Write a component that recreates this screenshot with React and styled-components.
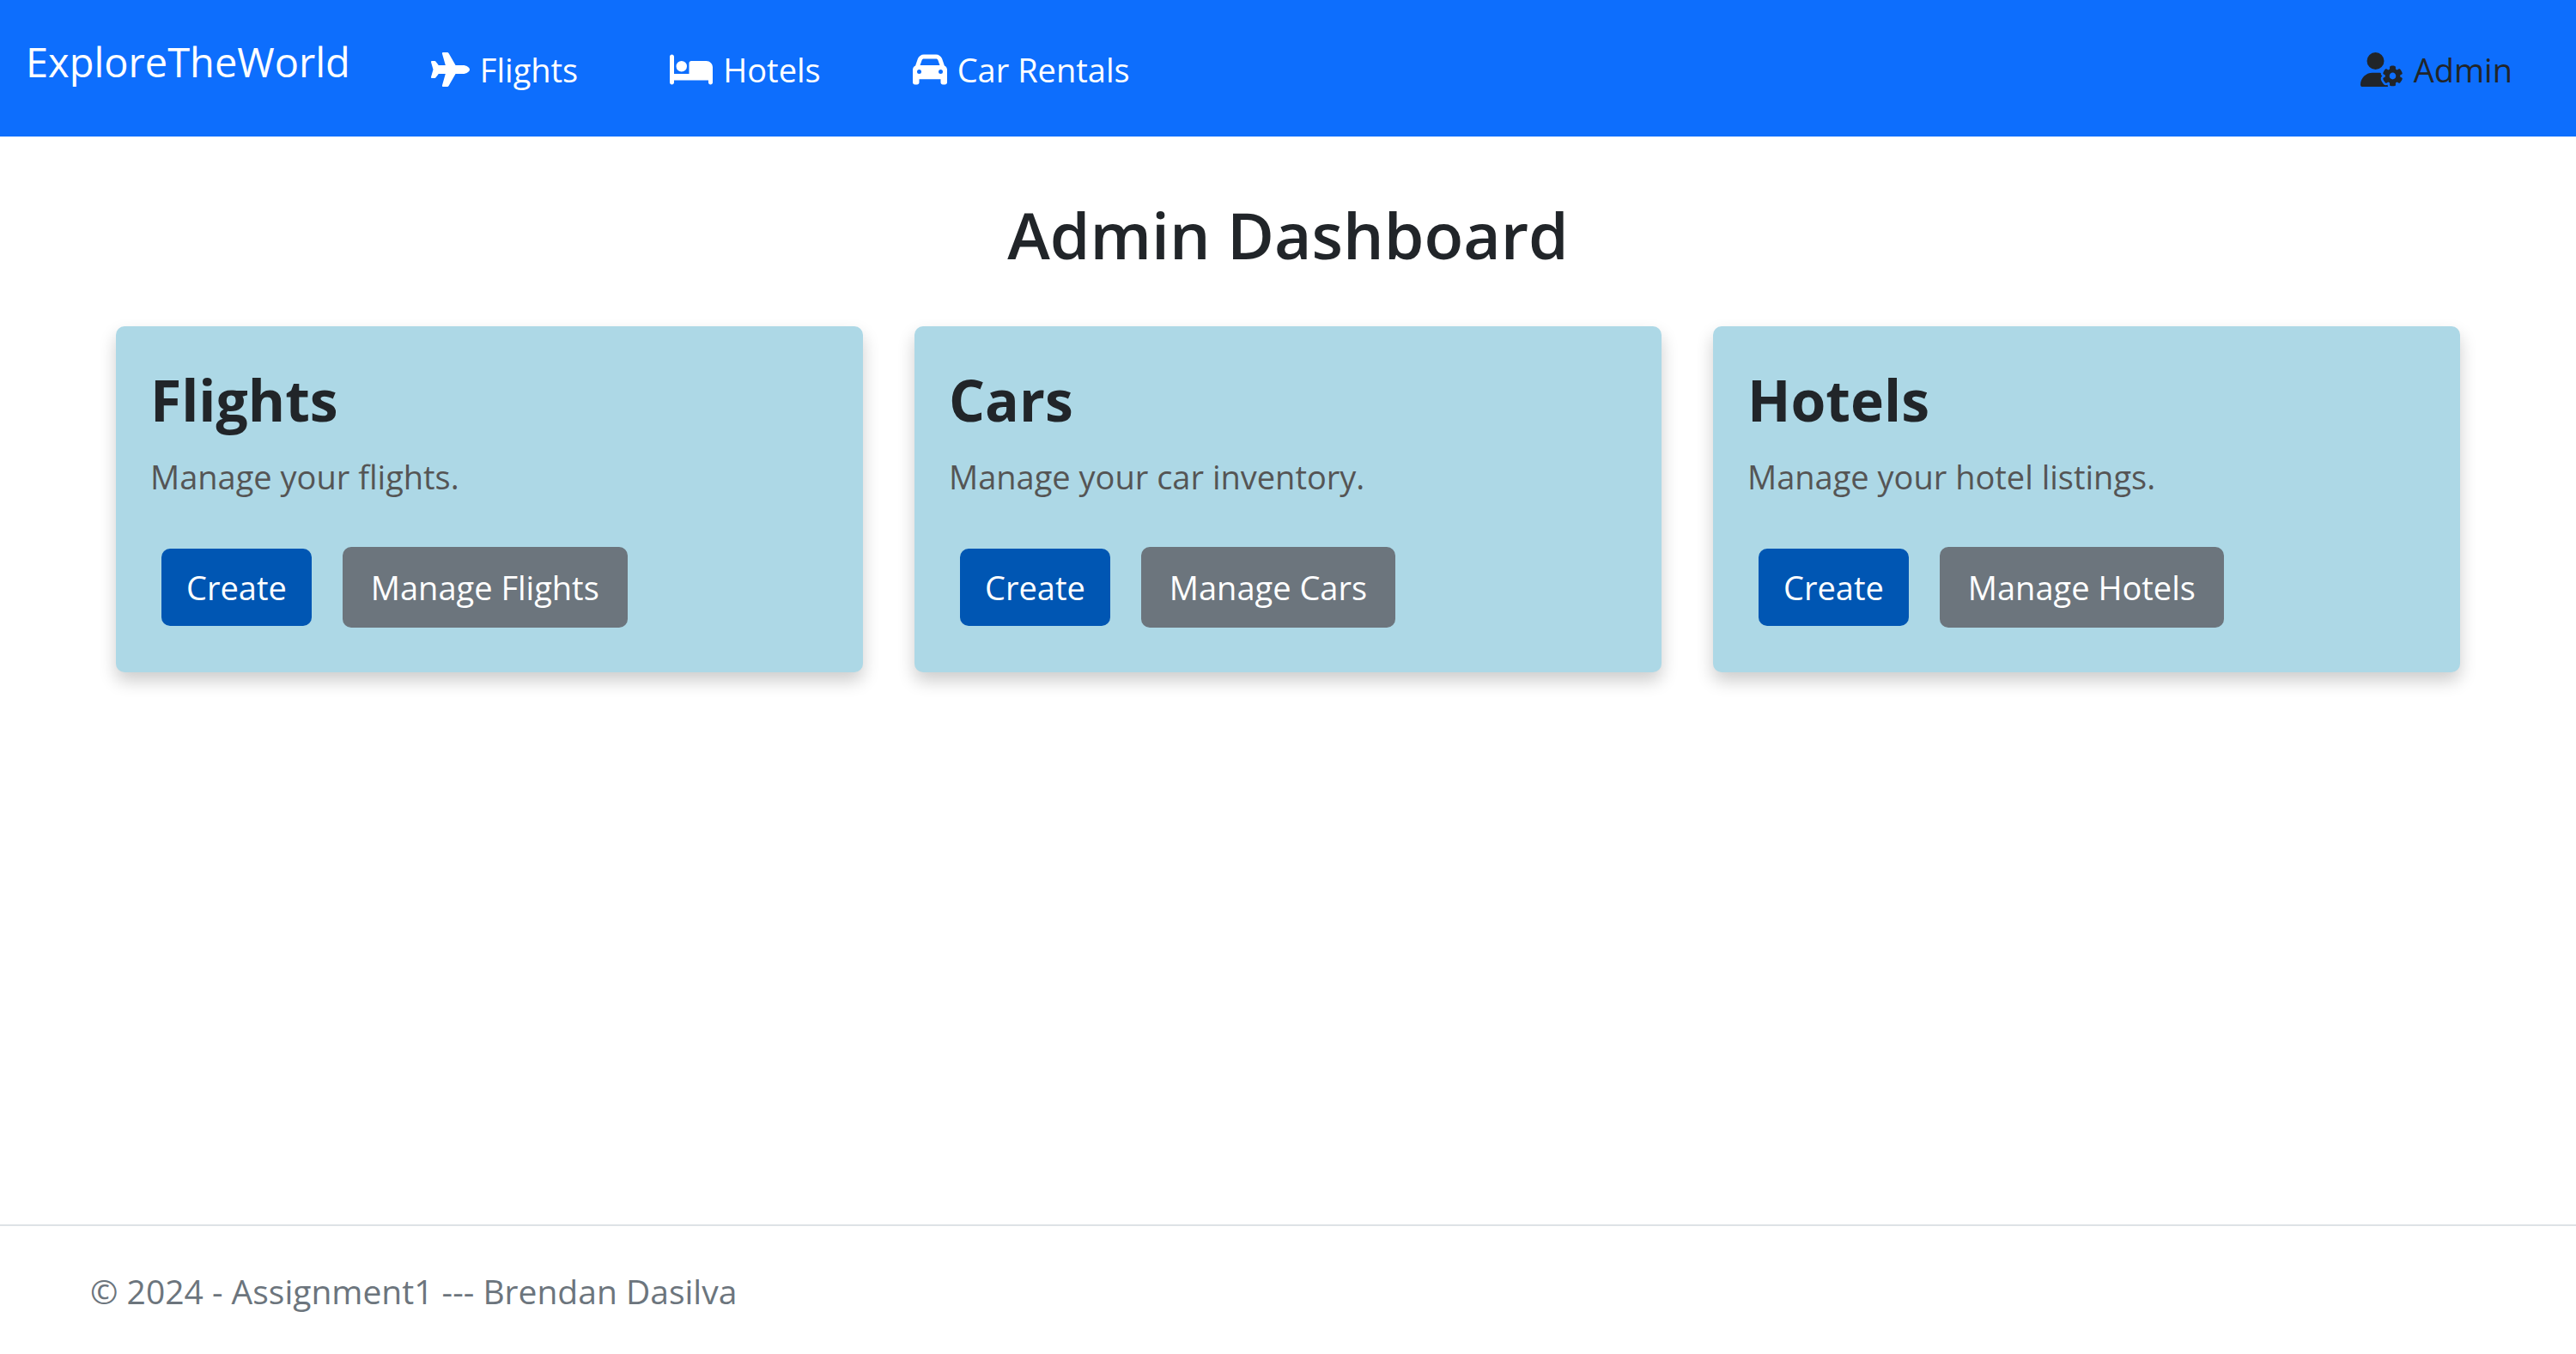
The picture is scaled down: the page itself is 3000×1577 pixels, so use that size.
import React from "react";
import styled, { createGlobalStyle, css } from "styled-components";
import { FaPlane, FaBed, FaCar, FaUserGear } from "react-icons/fa6";

const GlobalStyle = createGlobalStyle`
  *, *::before, *::after {
    box-sizing: border-box;
  }

  body {
    margin: 0;
    background: #fff;
    color: #212529;
    font-family: "Segoe UI", "Open Sans", "Noto Sans", sans-serif;
    font-size: 38px;
    line-height: 60px;
  }
`;

const Page = styled.div`
  display: flex;
  flex-direction: column;
  min-height: 100vh;
`;

const Header = styled.header`
  background: #0d6efd;
`;

const Navbar = styled.nav`
  display: flex;
  align-items: center;
  padding: 36px 74px 38px 30px;
`;

const Brand = styled.a`
  align-self: flex-start;
  margin-right: 94px;
  color: #fff;
  font-size: 47px;
  line-height: 72px;
  text-decoration: none;
`;

const NavList = styled.ul`
  display: flex;
  flex: 1;
  gap: 107px;
  margin: 0;
  padding: 15px 0 10px;
  list-style: none;
`;

const NavItem = styled.li`
  &:last-child {
    margin-left: auto;
  }
`;

const NavLink = styled.a`
  display: flex;
  align-items: center;
  gap: 12px;
  color: ${({ $dark }) => ($dark ? "#212529" : "#fff")};
  text-decoration: none;

  svg {
    width: ${({ $iconWidth }) => $iconWidth}px;
    height: 40px;
  }
`;

const Main = styled.main`
  flex: 1;
  width: 100%;
  max-width: 2850px;
  margin: 0 auto;
  padding: 66px 60px 40px;
`;

const Title = styled.h1`
  margin: 0 0 59px;
  font-size: 75px;
  font-weight: 600;
  line-height: 96px;
  text-align: center;
`;

const CardGrid = styled.div`
  display: grid;
  grid-template-columns: repeat(3, 1fr);
  gap: 60px;
`;

const Card = styled.section`
  padding: 43px 40px 52px;
  border-radius: 10px;
  background: #add8e6;
  box-shadow: 0 10px 20px rgba(0, 0, 0, 0.2);
`;

const CardTitle = styled.h2`
  margin: 0 0 18px;
  font-size: 66px;
  font-weight: 700;
  line-height: 84px;
`;

const CardText = styled.p`
  margin: 0 0 52px;
  color: #555;
`;

const Actions = styled.div`
  display: flex;
  align-items: center;
  gap: 36px;
  padding: 0 13px;
`;

const Button = styled.button`
  border: 0;
  border-radius: 10px;
  color: #fff;
  font: inherit;
  cursor: pointer;

  ${({ $secondary }) =>
    $secondary
      ? css`
          padding: 17px 33px;
          background: #6c757d;
        `
      : css`
          padding: 15px 29px;
          background: #0056b3;
        `}
`;

const Footer = styled.footer`
  border-top: 2px solid #dee2e6;
  color: #6c757d;
`;

const FooterInner = styled.div`
  max-width: 2850px;
  margin: 0 auto;
  padding: 46px 30px 43px;
  font-size: 39px;
`;

const navLinks = [
  { label: "Flights", Icon: FaPlane, iconWidth: 45 },
  { label: "Hotels", Icon: FaBed, iconWidth: 50 },
  { label: "Car Rentals", Icon: FaCar, iconWidth: 40 },
  { label: "Admin", Icon: FaUserGear, iconWidth: 50, dark: true },
];

const cards = [
  { title: "Flights", text: "Manage your flights." },
  { title: "Cars", text: "Manage your car inventory." },
  { title: "Hotels", text: "Manage your hotel listings." },
];

export default function App() {
  return (
    <Page>
      <GlobalStyle />
      <Header>
        <Navbar>
          <Brand href="#">ExploreTheWorld</Brand>
          <NavList>
            {navLinks.map(({ label, Icon, iconWidth, dark }) => (
              <NavItem key={label}>
                <NavLink href="#" $dark={dark} $iconWidth={iconWidth}>
                  <Icon aria-hidden="true" />
                  {label}
                </NavLink>
              </NavItem>
            ))}
          </NavList>
        </Navbar>
      </Header>
      <Main>
        <Title>Admin Dashboard</Title>
        <CardGrid>
          {cards.map(({ title, text }) => (
            <Card key={title}>
              <CardTitle>{title}</CardTitle>
              <CardText>{text}</CardText>
              <Actions>
                <Button type="button">Create</Button>
                <Button type="button" $secondary>
                  Manage {title}
                </Button>
              </Actions>
            </Card>
          ))}
        </CardGrid>
      </Main>
      <Footer>
        <FooterInner>© 2024 - Assignment1 --- Brendan Dasilva</FooterInner>
      </Footer>
    </Page>
  );
}
